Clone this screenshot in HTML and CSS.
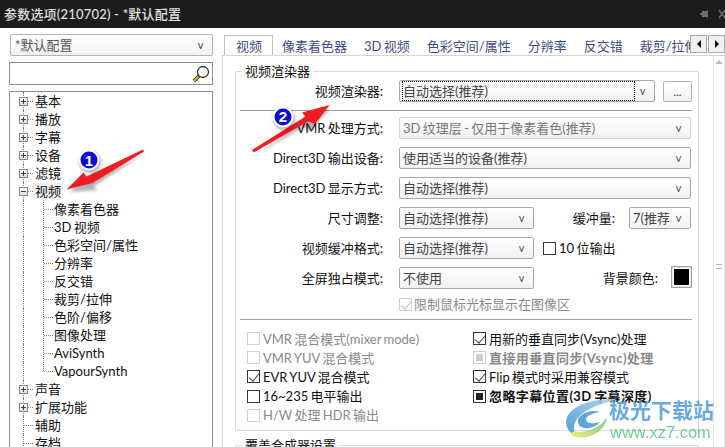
FILE: index.html
```html
<!DOCTYPE html>
<html lang="zh-CN">
<head>
<meta charset="utf-8">
<title>参数选项</title>
<link rel="stylesheet" href="styles.css">
</head>
<body>
<header class="titlebar">
  <span class="title">参数选项(210702) - *默认配置</span>
  <svg class="pin" width="13" height="10" viewBox="0 0 13 10"><path d="M0 5h4M4 4h2V2h5v-1h1v8h-1V8H6V6H4z" fill="#6e6e6e"/></svg>
  <svg class="close" width="6" height="10" viewBox="0 0 6 10"><path d="M0 1l6 8M0 9l6-8" stroke="#6e6e6e" stroke-width="1.4"/></svg>
</header>
<main class="main">
  <aside class="side">
    <div class="combo side-combo"><span class="combo-text">*默认配置</span><span class="arrow">v</span></div>
    <div class="search">
      <svg width="18" height="18" viewBox="0 0 18 18"><path d="M7 11l-5 5" stroke="#111" stroke-width="3.4"/><path d="M6.600 11.400l-4.400 4.400" stroke="#f5d600" stroke-width="1.800"/><circle cx="11" cy="7" r="5.500" fill="#fff" stroke="#333" stroke-width="1.300"/></svg>
    </div>
    <nav class="tree">
      <div class="node"><i class="box plus"></i><span>基本</span></div>
      <div class="node"><i class="box plus"></i><span>播放</span></div>
      <div class="node"><i class="box plus"></i><span>字幕</span></div>
      <div class="node"><i class="box plus"></i><span>设备</span></div>
      <div class="node"><i class="box plus"></i><span>滤镜</span></div>
      <div class="node"><i class="box"></i><span class="selected">视频</span></div>
      <div class="kids">
        <div class="node leaf"><span>像素着色器</span></div>
        <div class="node leaf"><span>3D 视频</span></div>
        <div class="node leaf"><span>色彩空间/属性</span></div>
        <div class="node leaf"><span>分辨率</span></div>
        <div class="node leaf"><span>反交错</span></div>
        <div class="node leaf"><span>裁剪/拉伸</span></div>
        <div class="node leaf"><span>色阶/偏移</span></div>
        <div class="node leaf"><span>图像处理</span></div>
        <div class="node leaf"><span>AviSynth</span></div>
        <div class="node leaf"><span>VapourSynth</span></div>
      </div>
      <div class="node"><i class="box plus"></i><span>声音</span></div>
      <div class="node"><i class="box plus"></i><span>扩展功能</span></div>
      <div class="node bare"><span>辅助</span></div>
      <div class="node bare"><span>存档</span></div>
    </nav>
  </aside>
  <section class="panel">
    <div class="tabs">
      <span class="tab active">视频</span>
      <span class="tab">像素着色器</span>
      <span class="tab">3D 视频</span>
      <span class="tab">色彩空间/属性</span>
      <span class="tab">分辨率</span>
      <span class="tab">反交错</span>
      <span class="tab">裁剪/拉伸</span>
    </div>
    <div class="tab-scroll">
      <span class="tab-btn"><i class="tri left"></i></span><span class="tab-btn"><i class="tri right"></i></span>
    </div>
    <div class="body">
      <div class="groups">
        <div class="group">
          <div class="legend">视频渲染器</div>
          <div class="row first">
            <label class="lbl">视频渲染器:</label>
            <div class="combo w-main focus"><span class="combo-text">自动选择(推荐)</span><span class="arrow">v</span></div>
            <div class="dots">...</div>
          </div>
          <hr class="sep">
          <div class="row">
            <label class="lbl">VMR 处理方式:</label>
            <div class="combo w-full off"><span class="combo-text">3D 纹理层 - 仅用于像素着色(推荐)</span><span class="arrow">v</span></div>
          </div>
          <div class="row">
            <label class="lbl">Direct3D 输出设备:</label>
            <div class="combo w-full"><span class="combo-text">使用适当的设备(推荐)</span><span class="arrow">v</span></div>
          </div>
          <div class="row">
            <label class="lbl">Direct3D 显示方式:</label>
            <div class="combo w-full"><span class="combo-text">自动选择(推荐)</span><span class="arrow">v</span></div>
          </div>
          <div class="row">
            <label class="lbl">尺寸调整:</label>
            <div class="combo w-half"><span class="combo-text">自动选择(推荐)</span><span class="arrow">v</span></div>
            <label class="lbl-mid">缓冲量:</label>
            <div class="combo w-small"><span class="combo-text">7(推荐</span><span class="arrow">v</span></div>
          </div>
          <div class="row">
            <label class="lbl">视频缓冲格式:</label>
            <div class="combo w-half"><span class="combo-text">自动选择(推荐)</span><span class="arrow">v</span></div>
            <div class="check ten"><i class="chk"></i><span>10 位输出</span></div>
          </div>
          <div class="row">
            <label class="lbl">全屏独占模式:</label>
            <div class="combo w-half"><span class="combo-text">不使用</span><span class="arrow">v</span></div>
            <label class="lbl-bg">背景颜色:</label>
            <span class="swatch"></span>
          </div>
          <div class="check off limit"><i class="chk on"></i><span>限制鼠标光标显示在图像区</span></div>
          <hr class="sep lower">
          <div class="checks">
            <div class="check off"><i class="chk"></i><span>VMR 混合模式(mixer mode)</span></div>
            <div class="check"><i class="chk on"></i><span>用新的垂直同步(Vsync)处理</span></div>
            <div class="check off"><i class="chk"></i><span>VMR YUV 混合模式</span></div>
            <div class="check off"><i class="chk mixed"></i><span class="strong">直接用垂直同步(Vsync)处理</span></div>
            <div class="check"><i class="chk on"></i><span>EVR YUV 混合模式</span></div>
            <div class="check"><i class="chk on"></i><span>Flip 模式时采用兼容模式</span></div>
            <div class="check"><i class="chk"></i><span>16~235 电平输出</span></div>
            <div class="check"><i class="chk mixed"></i><span class="strong">忽略字幕位置(3D 字幕深度)</span></div>
            <div class="check off"><i class="chk"></i><span>H/W 处理 HDR 输出</span></div>
          </div>
        </div>
        <div class="group next">
          <div class="legend">覆盖合成器设置</div>
        </div>
      </div>
      <div class="scrollbar">
        <span class="sb-btn"><i class="tri up"></i></span>
        <span class="grip"></span>
      </div>
    </div>
  </section>
</main>
<svg class="overlay" width="725" height="447" viewBox="0 0 725 447">
  <defs>
    <filter id="soft" x="-20%" y="-20%" width="140%" height="140%"><feGaussianBlur stdDeviation="1.600"/></filter>
    <linearGradient id="swirlTop" x1="1" y1="0" x2="0" y2="1">
      <stop offset="0" stop-color="#a8d8f0"/>
      <stop offset="1" stop-color="#3f8fd0"/>
    </linearGradient>
    <linearGradient id="swirlTail" x1="0" y1="1" x2="1" y2="0">
      <stop offset="0" stop-color="#f2ea70"/>
      <stop offset="1" stop-color="#5cc08a"/>
    </linearGradient>
  </defs>
  <g>
    <path d="M145 153L94 186L97 190L70 192L85 176L88 180Z" fill="#000" opacity=".3" filter="url(#soft)"/>
    <path d="M143 149.500L144 151.500L92.500 183L66.500 189.500L83.500 172.500L86.500 176.500Z" fill="#ef1c24"/>
    <circle cx="90" cy="162" r="11" fill="#000" opacity=".3" filter="url(#soft)"/>
    <circle cx="89" cy="160" r="10.500" fill="#fff"/>
    <circle cx="89" cy="160" r="8.500" fill="#0a0adf"/>
    <text class="badge" x="89" y="165.500">1</text>
  </g>
  <g>
    <path d="M255 155L304 127L309 132L331 108L303 116L306 120Z" fill="#000" opacity=".3" filter="url(#soft)"/>
    <path d="M252 150L253.500 152.500L308 121.500L315 124L329.500 105L302 112.500L305.500 116.500Z" fill="#ef1c24"/>
    <circle cx="284" cy="119" r="11" fill="#000" opacity=".3" filter="url(#soft)"/>
    <circle cx="283" cy="117" r="10.500" fill="#fff"/>
    <circle cx="283" cy="117" r="8.500" fill="#0a0adf"/>
    <text class="badge" x="283" y="122">2</text>
  </g>
  <g opacity=".88">
    <path d="M617 399C595 398 567 405 566 422C566 428 570 433 576 436C572 428 574 420 582 414C592 406 606 403 617 399Z" fill="url(#swirlTop)"/>
    <path d="M600 412C588 408 572 418 580 426C586 431 596 427 600 422C594 424 587 424 586 420C585 416 593 413 600 412Z" fill="#4a9ccf"/>
    <path d="M572 436C590 442 606 430 607 417C602 426 590 433 572 432Z" fill="url(#swirlTail)"/>
  </g>
  <text class="wm-cn" x="609" y="418">极光下载站</text>
  <text class="wm-en" x="610" y="438">www.xz7.com</text>
</svg>
</body>
</html>
```

FILE: styles.css
```css
* { box-sizing: border-box; }
html, body { margin: 0; padding: 0; }
body {
  width: 725px;
  height: 447px;
  overflow: hidden;
  position: relative;
  background: #fff;
  color: #111;
  font: 13px/18px Lato, "Noto Sans CJK SC", "Liberation Sans", sans-serif;
  word-spacing: -1px;
}

/* title bar */
.titlebar {
  height: 28px;
  background: #1c1c1c;
  color: #e2e2e2;
  display: flex;
  align-items: center;
  padding: 0 2px 0 4px;
}
.title { font-weight: 500; flex: 1; letter-spacing: .2px; word-spacing: 0; }
.pin { margin-right: 10px; }
.close { margin-right: -2px; }

/* layout */
.main { display: flex; height: 419px; overflow: hidden; }
.side { width: 222px; flex: none; padding: 6px 0 0 9px; }
.panel { flex: 1; position: relative; min-width: 0; }

/* combo */
.combo {
  height: 22px;
  border: 1px solid #a9a9a9;
  border-radius: 2px;
  background: linear-gradient(#fff, #f1f1f1);
  color: #444;
  display: flex;
  align-items: center;
  padding: 0 3px 0 3px;
  flex: none;
  position: relative;
}
.combo-text { flex: 1; white-space: nowrap; overflow: hidden; }
.arrow { width: 17px; text-align: center; font-size: 11px; color: #555; flex: none; }
.side-combo { width: 203px; margin-left: 1px; border-color: #b4b4b4; padding-left: 4px; color: #555; }
.side-combo .arrow { color: #444; }
.search {
  width: 204px;
  height: 23px;
  margin-top: 6px;
  border: 1px solid #8c8c8c;
  background: #fff;
  display: flex;
  justify-content: flex-end;
  align-items: center;
  padding-right: 2px;
}
.tree {
  width: 204px;
  height: 356px;
  margin-top: 6px;
  border: 1px solid #8c8c8c;
  border-bottom: 0;
  background: #fff;
  overflow: hidden;
}

/* tree */
.node {
  height: 18px;
  position: relative;
  padding-left: 25px;
  display: flex;
  align-items: center;
}
.node::before {
  content: "";
  position: absolute;
  left: 13px;
  top: 0;
  bottom: 0;
  border-left: 1px dotted #808080;
}
.node::after {
  content: "";
  position: absolute;
  left: 14px;
  width: 9px;
  top: 9px;
  border-top: 1px dotted #808080;
}
.box {
  position: absolute;
  left: 9px;
  top: 5px;
  width: 9px;
  height: 9px;
  background: linear-gradient(#fff, #ddd) #eee;
  border: 1px solid #8a8a8a;
  z-index: 1;
}
.box::before {
  content: "";
  position: absolute;
  left: 1px;
  top: 3px;
  width: 5px;
  height: 1px;
  background: #2f3f7f;
}
.box.plus::after {
  content: "";
  position: absolute;
  left: 3px;
  top: 1px;
  width: 1px;
  height: 5px;
  background: #2f3f7f;
}
.selected { background: #f0f0f0; margin-left: -2px; padding: 0 2px; line-height: 16px; }
.kids { position: relative; }
.kids::before {
  content: "";
  position: absolute;
  left: 33px;
  top: 0;
  bottom: 9px;
  border-left: 1px dotted #808080;
  z-index: 1;
}
.leaf { padding-left: 44px; }
.leaf::after { left: 34px; }

/* tabs */
.tabs {
  height: 28px;
  padding: 7px 0 0 2px;
  display: flex;
  overflow: hidden;
  border-bottom: 1px solid #d4d4d4;
  white-space: nowrap;
}
.tab { padding: 2px 8.500px 0; color: #414b86; flex: none; height: 21px; }
.tab.active {
  padding: 1px 10px 0 11px;
  height: 22px;
  margin-right: .500px;
  border: 1px solid #b7c0d4;
  border-bottom: 0;
  background: #fff;
}
.tab-scroll { position: absolute; right: 0; top: 7px; display: flex; gap: 1px; }
.tab-btn {
  width: 17px;
  height: 18px;
  background: #f0f0f0;
  border: 1px solid #a9a9a9;
  display: flex;
  align-items: center;
  justify-content: center;
}
.tri { display: block; width: 0; height: 0; border: 4px solid transparent; }
.tri.left { border-right-color: #000; border-left-width: 0; }
.tri.right { border-left-color: #000; border-right-width: 0; }
.tri.up { border-bottom-color: #bbb; border-top-width: 0; }

/* content */
.body {
  height: 391px;
  border-left: 1px solid #d9d9d9;
  display: flex;
  overflow: hidden;
}
.groups { width: 490px; flex: none; padding: 15px 0 0 12px; overflow: hidden; }
.group {
  width: 464px;
  height: 360px;
  border: 1px solid #d9d9d9;
  border-radius: 2px;
}
.group.next { margin-top: 14px; height: 12px; }
.legend {
  width: fit-content;
  margin: -10px 0 0 6px;
  padding: 0 3px;
  background: #fff;
  height: 18px;
}
.row { display: flex; align-items: center; height: 22px; margin-bottom: 8px; }
.row.first { margin-bottom: 0; }
.lbl { width: 147px; text-align: right; margin-right: 16px; flex: none; white-space: nowrap; }
.sep { margin: 8px 5px 6px 4px; border: 0; border-top: 1px solid #a0a0a0; height: 0; width: 452px; }
.sep.lower { margin-top: 8px; margin-bottom: 9px; }
.w-main { width: 256px; }
.w-full { width: 292px; }
.w-half { width: 135px; }
.w-small { width: 62px; }
.focus .combo-text { outline: 1px dotted #000; outline-offset: 0; height: 18px; }
.combo.off { border-color: #d4d4d4; color: #777; }
.dots {
  width: 29px;
  height: 21px;
  margin-left: 8px;
  border: 1px solid #b0b0b0;
  border-radius: 2px;
  background: linear-gradient(#fff, #f1f1f1);
  text-align: center;
  line-height: 20px;
  color: #333;
  font-size: 11px;
}
.lbl-mid { width: 81px; text-align: right; margin-right: 14px; flex: none; }
.lbl-bg { width: 124px; text-align: right; flex: none; margin-right: 13px; }
.swatch {
  width: 21px;
  height: 22px;
  border: 2px solid #e8e8e8;
  outline: 1px solid #a0a0a0;
  outline-offset: -1px;
  background: #000;
  box-shadow: inset 0 0 0 1px #fff;
  margin-top: -3px;
}
.check { display: flex; align-items: center; gap: 3px; height: 19px; white-space: nowrap; }
.check.ten { margin-left: 9px; }
.check.limit { margin-left: 163px; height: 14px; gap: 2px; }
.chk {
  width: 13px;
  height: 13px;
  border: 1px solid #333;
  background: #fff;
  flex: none;
  position: relative;
}
.chk.on::after {
  content: "";
  position: absolute;
  left: 3px;
  top: 0;
  width: 5px;
  height: 9px;
  border-right: 1.4px solid #444;
  border-bottom: 1.4px solid #444;
  transform: rotate(40deg);
}
.chk.mixed::after {
  content: "";
  position: absolute;
  left: 2px;
  top: 2px;
  width: 7px;
  height: 7px;
  background: #222;
}
.off { color: #8a8a8a; }
.off .chk { border-color: #cfcfcf; }
.off .chk.on::after { border-color: #bbb; }
.off .chk.mixed::after { background: #ccc; }
.strong { font-weight: 700; letter-spacing: .4px; }
.checks {
  display: grid;
  grid-template-columns: 226px 1fr;
  grid-auto-rows: 19.2px;
  padding-left: 11px;
}

/* scrollbar */
.scrollbar {
  width: 12px;
  border-left: 1px solid #e6e6e6;
  border-right: 1px solid #e6e6e6;
  display: flex;
  flex-direction: column;
  align-items: center;
}
.sb-btn { height: 11px; display: flex; align-items: center; }
.grip { width: 6px; height: 5px; margin-top: 197px; border-top: 1px solid #bbb; border-bottom: 1px solid #bbb; }

/* overlay */
.overlay { position: absolute; left: 0; top: 0; pointer-events: none; }
.badge { font: 700 15px "Liberation Sans", sans-serif; fill: #fff; text-anchor: middle; }
.wm-cn { font: 700 21px "Noto Sans CJK SC", sans-serif; fill: #4f9be0; opacity: .85; word-spacing: 0; }
.wm-en { font: 400 16.500px "Liberation Sans", sans-serif; fill: #62c98d; opacity: .9; word-spacing: 0; }
```
